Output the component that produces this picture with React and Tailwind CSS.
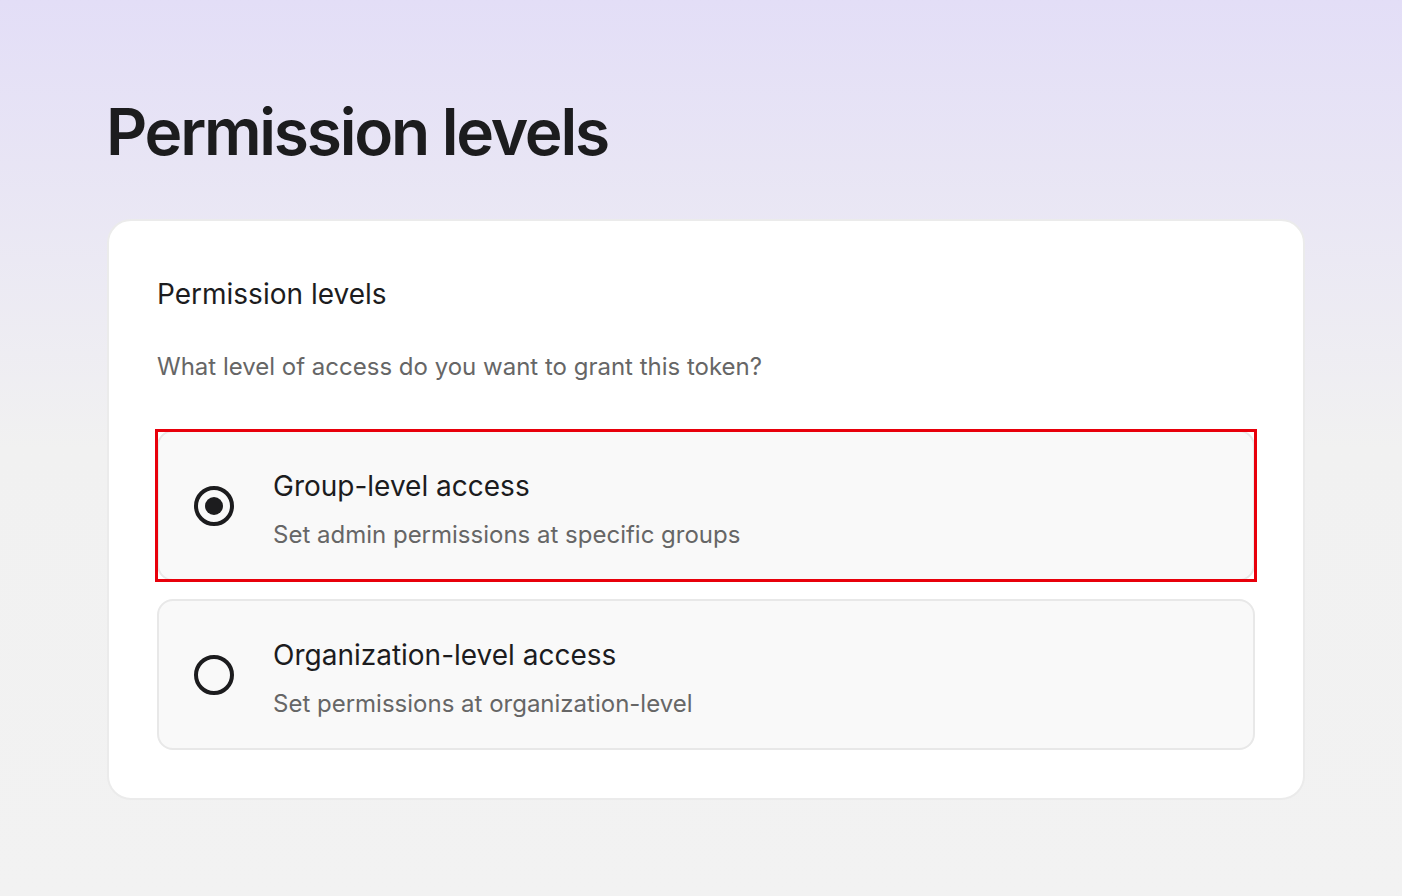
import React, { useState } from 'react';

const options = [
  { id: 'group', title: 'Group-level access', desc: 'Set admin permissions at specific groups' },
  { id: 'org', title: 'Organization-level access', desc: 'Set permissions at organization-level' },
];

function Radio({ checked }) {
  return (
    <span className="w-[40px] h-[40px] shrink-0 rounded-full border-[4px] border-[#1c1c1e] flex items-center justify-center">
      {checked && <span className="w-[18px] h-[18px] rounded-full bg-[#1c1c1e]" />}
    </span>
  );
}

export default function App() {
  const [selected, setSelected] = useState('group');

  return (
    <div
      className="min-h-screen bg-gradient-to-b from-[#e3def7] via-[#f1f1f1] via-50% to-[#f2f2f2] text-[#1c1c1e] px-[107px] pt-[92px] pb-[96px]"
      style={{ fontFamily: 'Inter, "Noto Sans", sans-serif' }}
    >
      <h1 className="text-[64px] leading-[80px] font-semibold tracking-[-0.035em] -ml-px">Permission levels</h1>

      <div className="mt-[47px] w-[1198px] bg-white border-2 border-[#ebebeb] rounded-[24px] px-[48px] pt-[55px] pb-[48px]">
        <h2 className="text-[28px] leading-[36px] font-normal">Permission levels</h2>
        <p className="mt-[39px] text-[24px] leading-[32px] text-[#666666]">
          What level of access do you want to grant this token?
        </p>

        <div className="mt-[47px] flex flex-col gap-[18px]">
          {options.map((o) => (
            <div key={o.id} className="relative">
              <button
                onClick={() => setSelected(o.id)}
                className="w-full flex items-center gap-[39px] text-left bg-[#f9f9f9] border-2 border-[#e8e8e8] rounded-[16px] pl-[35px] pr-[24px] h-[151px]"
              >
                <Radio checked={selected === o.id} />
                <span className="flex flex-col gap-[15px] pt-[8px]">
                  <span className="text-[28px] leading-[36px]">{o.title}</span>
                  <span className="text-[24px] leading-[32px] text-[#666666]">{o.desc}</span>
                </span>
              </button>
              {o.id === 'group' && (
                <span className="pointer-events-none absolute -inset-x-[2px] -inset-y-[1px] border-[3px] border-[#e8000b]" />
              )}
            </div>
          ))}
        </div>
      </div>
    </div>
  );
}
